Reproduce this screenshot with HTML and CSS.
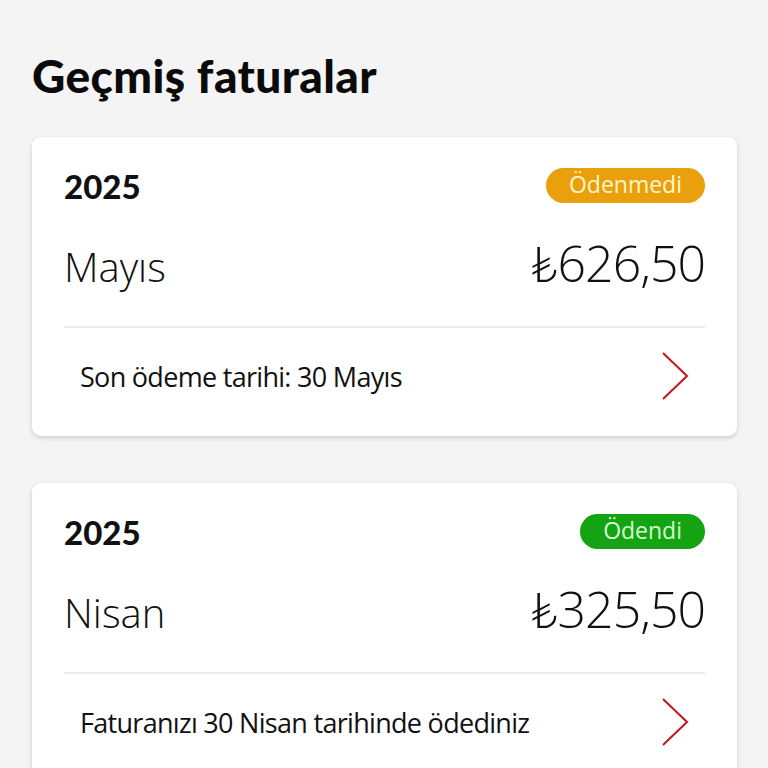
FILE: index.html
```
<!DOCTYPE html>
<html lang="tr">
<head>
<meta charset="utf-8">
<link rel="stylesheet" href="styles.css">
</head>
<body>
<main class="page">
  <h1 class="title">Geçmiş faturalar</h1>
  <section class="card">
    <div class="top">
      <div class="head">
        <span class="year">2025</span>
        <span class="badge badge-unpaid">Ödenmedi</span>
      </div>
      <div class="amount-row">
        <span class="month">Mayıs</span>
        <span class="amount"><span class="cur">₺</span>626,50</span>
      </div>
    </div>
    <div class="foot">
      <span class="note">Son ödeme tarihi: 30 Mayıs</span>
      <svg class="chev" width="28" height="50" viewBox="0 0 28 50"><path d="M2 2 L26 25 L2 48" fill="none" stroke="#c0161c" stroke-width="2"/></svg>
    </div>
  </section>
  <section class="card">
    <div class="top">
      <div class="head">
        <span class="year">2025</span>
        <span class="badge badge-paid">Ödendi</span>
      </div>
      <div class="amount-row">
        <span class="month">Nisan</span>
        <span class="amount"><span class="cur">₺</span>325,50</span>
      </div>
    </div>
    <div class="foot">
      <span class="note">Faturanızı 30 Nisan tarihinde ödediniz</span>
      <svg class="chev" width="28" height="50" viewBox="0 0 28 50"><path d="M2 2 L26 25 L2 48" fill="none" stroke="#c0161c" stroke-width="2"/></svg>
    </div>
  </section>
</main>
</body>
</html>
```

FILE: styles.css
```
html, body {
  margin: 0;
  padding: 0;
  background: #f4f4f4;
}
body {
  font-family: "Open Sans", "Liberation Sans", sans-serif;
  color: #111;
  overflow: hidden;
}
.page {
  padding: 50px 31px 0 32px;
  display: flex;
  flex-direction: column;
  gap: 47px;
}
.title {
  margin: 0 0 -12px;
  font-family: "Lato", "Liberation Sans", sans-serif;
  font-weight: 900;
  font-size: 46px;
  line-height: 52px;
  letter-spacing: 0.4px;
  color: #0a0a0a;
}
.card {
  background: #fff;
  border-radius: 9px;
  box-shadow: 0 2px 5px rgba(0,0,0,0.16);
  padding: 31px 32px 12px;
  display: flex;
  flex-direction: column;
}
.top {
  border-bottom: 2px solid #ebebeb;
  padding-bottom: 37px;
}
.head {
  display: flex;
  justify-content: space-between;
  align-items: center;
  height: 35px;
}
.year {
  font-family: "Lato", "Liberation Sans", sans-serif;
  font-weight: 900;
  font-size: 33px;
}
.badge {
  height: 35px;
  line-height: 33px;
  padding: 0 23px;
  border-radius: 18px;
  font-size: 23px;
  box-sizing: border-box;
}
.badge-unpaid {
  background: #e9a00c;
  color: #fff6c8;
}
.badge-paid {
  background: #13a313;
  color: #d8ffd0;
}
.amount-row {
  display: flex;
  justify-content: space-between;
  align-items: baseline;
  margin-top: 26px;
  height: 60px;
}
.month {
  font-weight: 300;
  font-size: 40px;
}
.amount {
  font-weight: 300;
  font-size: 50px;
  letter-spacing: -1px;
}
.cur {
  font-family: "Lato", "DejaVu Sans", sans-serif;
  font-weight: 300;
}
.foot {
  display: flex;
  justify-content: space-between;
  align-items: center;
  height: 96px;
  padding: 0 16px;
}
.note {
  font-size: 27px;
  letter-spacing: -0.7px;
}
.chev {
  display: block;
}
```
